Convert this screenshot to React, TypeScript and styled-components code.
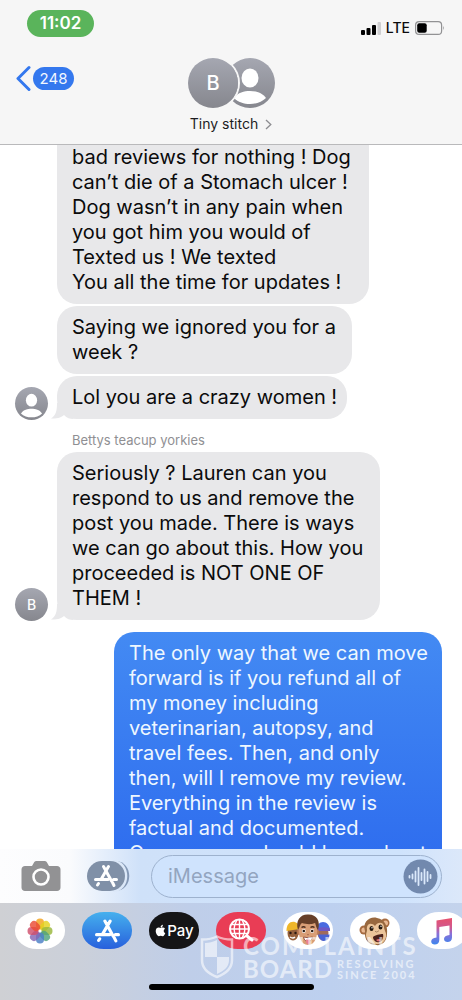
import React from "react";
import styled, { createGlobalStyle, css } from "styled-components";
import { FaApple } from "react-icons/fa";

const GlobalStyle = createGlobalStyle`
  *, *::before, *::after { box-sizing: border-box; }
  body { margin: 0; background: #fff; }
  button { font: inherit; border: 0; padding: 0; background: none; cursor: pointer; }
  svg { display: block; }
`;

const Screen = styled.div`
  position: relative;
  display: flex;
  flex-direction: column;
  height: 100vh;
  overflow: hidden;
  background: #fff;
  color: #0b0b0c;
  font-family: Inter, "Liberation Sans", sans-serif;
`;

/* ---------- header ---------- */

const Header = styled.header`
  flex: none;
  background: #f6f6f6;
  border-bottom: 1px solid #b9b9bb;
`;

const StatusBar = styled.div`
  display: flex;
  justify-content: space-between;
  align-items: flex-start;
  height: 58px;
  padding: 10px 17px 0 27px;
`;

const Clock = styled.button`
  width: 67px;
  height: 27px;
  border-radius: 14px;
  background: #5ab45b;
  color: #fff;
  font-size: 17px;
  font-weight: 600;
  line-height: 27px;
`;

const Signals = styled.div`
  display: flex;
  align-items: center;
  gap: 5px;
  padding-top: 9px;
  font-size: 14px;
  font-weight: 500;
  line-height: 18px;
`;

const TitleBar = styled.div`
  display: grid;
  grid-template-columns: 1fr auto 1fr;
  align-items: start;
  height: 86px;
  padding: 0 16px;
`;

const BackButton = styled.button`
  display: flex;
  align-items: center;
  justify-self: start;
  gap: 2px;
  margin-top: 7px;
`;

const UnreadCount = styled.span`
  width: 41px;
  height: 23px;
  border-radius: 12px;
  background: #3478ee;
  color: #f1f7ff;
  font-size: 15px;
  line-height: 23px;
  text-align: center;
`;

const Contact = styled.button`
  display: flex;
  flex-direction: column;
  align-items: center;
  gap: 7px;
  color: #1c1c1e;
`;

const AvatarPair = styled.span`
  display: flex;
  padding-left: 1px;
`;

const ContactName = styled.span`
  display: flex;
  align-items: center;
  gap: 7px;
  font-size: 14px;
  line-height: 18px;
`;

const Avatar = styled.span<{ $large?: boolean; $front?: boolean }>`
  display: grid;
  place-items: center;
  flex: none;
  overflow: hidden;
  border-radius: 50%;
  background: linear-gradient(#a5a7b1, #86878e);
  color: #fff;
  font-weight: 500;
  width: ${(p) => (p.$large ? 50 : 33)}px;
  height: ${(p) => (p.$large ? 50 : 33)}px;
  font-size: ${(p) => (p.$large ? 20 : 14)}px;
  ${(p) =>
    p.$front &&
    css`
      z-index: 1;
      margin-right: -13px;
      box-shadow: 0 0 0 2px #f6f6f6;
    `}
`;

/* ---------- conversation ---------- */

const Thread = styled.main`
  flex: 1;
  min-height: 0;
  overflow: hidden;
  display: flex;
  flex-direction: column;
  gap: 2px;
  padding: 0 20px 0 15px;
`;

const Row = styled.div<{ $sent?: boolean }>`
  display: flex;
  flex: none;
  align-items: flex-end;
  gap: 9px;
  justify-content: ${(p) => (p.$sent ? "flex-end" : "flex-start")};
  margin-top: ${(p) => (p.$sent ? 10 : 0)}px;
`;

const AvatarSlot = styled.div`
  flex: none;
  width: 33px;
  height: 32px;
`;

const Bubble = styled.p<{ $width: number; $sent?: boolean; $continued?: boolean }>`
  position: relative;
  margin: 0;
  width: ${(p) => p.$width}px;
  max-width: 100%;
  padding: ${(p) => (p.$continued ? 0 : 9)}px 5px 9px 15px;
  border-radius: ${(p) => (p.$continued ? "0 0 20px 20px" : "20px")};
  background: ${(p) => (p.$sent ? "linear-gradient(#438af3, #2d6bee)" : "#e8e8ea")};
  color: ${(p) => (p.$sent ? "#eef7ff" : "#0b0b0c")};
  font-size: 20px;
  line-height: 25px;
  white-space: pre-line;
`;

const TailShape = styled.svg`
  position: absolute;
  left: -6px;
  bottom: 0;
`;

const Sender = styled.div`
  flex: none;
  padding: 11px 0 2px 57px;
  color: #8f8f93;
  font-size: 13px;
  line-height: 16px;
`;

/* ---------- composer ---------- */

const Composer = styled.form`
  flex: none;
  display: flex;
  align-items: center;
  height: 54px;
  padding: 0 20px 0 21px;
  background: linear-gradient(90deg, #fdfdfe 0, #fafbfd 70px, #cfe1f9 140px, #cfe3fc 400px, #dce8fa 100%);
`;

const CameraButton = styled.button`
  margin-right: 26px;
`;

const AppsButton = styled.button`
  margin-right: 21px;
`;

const Field = styled.div`
  flex: 1;
  min-width: 0;
  display: flex;
  align-items: center;
  height: 43px;
  padding: 0 3px 0 16px;
  border: 1px solid #9eb2ce;
  border-radius: 22px;
  background: #cfe3fd;
`;

const MessageInput = styled.input`
  flex: 1;
  min-width: 0;
  border: 0;
  padding: 0;
  outline: 0;
  background: none;
  color: #1c1c1e;
  font: 20px/25px Inter, "Liberation Sans", sans-serif;
  &::placeholder { color: #93a5c0; opacity: 1; }
`;

/* ---------- app drawer ---------- */

const Drawer = styled.nav`
  flex: none;
  display: flex;
  flex-direction: column;
  justify-content: space-between;
  align-items: center;
  height: 97px;
  padding: 9px 0 10px;
  background: linear-gradient(90deg, #cfd0d4 0, #cbd0da 80px, #bfcee9 190px, #bdd0ef 330px, #c4d3ec 100%);
`;

const AppRow = styled.div`
  align-self: stretch;
  display: flex;
  gap: 17px;
  padding-left: 15px;
  overflow: hidden;
`;

const AppButton = styled.button<{ $fill?: string }>`
  display: flex;
  align-items: center;
  justify-content: center;
  flex: none;
  width: 50px;
  height: 37px;
  border-radius: 22px / 18px;
  background: ${(p) => p.$fill ?? "#fff"};
  color: #fff;
  font-size: 15px;
  line-height: 20px;
  font-weight: 500;
`;

const HomeIndicator = styled.div`
  width: 165px;
  height: 6px;
  border-radius: 3px;
  background: #000;
`;

/* ---------- watermark ---------- */

const Watermark = styled.div`
  position: absolute;
  right: 49px;
  bottom: 20px;
  display: flex;
  align-items: center;
  gap: 9px;
  color: #fff;
  opacity: 0.58;
  pointer-events: none;
  font-family: Lato, sans-serif;
  font-weight: 700;
`;

const MarkWords = styled.div`
  width: 170px;
  white-space: nowrap;
`;

const MarkLine = styled.div<{ $spaced?: boolean }>`
  display: flex;
  align-items: center;
  gap: 4px;
  font-size: 24px;
  line-height: 23px;
  letter-spacing: ${(p) => (p.$spaced ? 2 : 1)}px;
`;

const MarkNote = styled.div`
  font-size: 11px;
  line-height: 11px;
  letter-spacing: 2px;
`;

/* ---------- drawings ---------- */

const Person = ({ size }: { size: number }) => (
  <svg width={size} height={size} viewBox="0 0 50 50" aria-hidden="true">
    <ellipse cx="25" cy="20" rx="8.5" ry="9.6" fill="#fff" />
    <path d="M9 40C13 34.5 19 33 25 33s12 1.500 16 7c-4 4-10 6-16 6S13 44 9 40Z" fill="#fff" />
  </svg>
);

const Tail = () => (
  <TailShape width="22" height="16" viewBox="0 0 22 16" aria-hidden="true">
    <path d="M6 0C6 8 5 12 0 15.500C5 15.500 10 15 13 12C16 15 19 16 22 16V0Z" fill="#e8e8ea" />
  </TailShape>
);

const StoreStrokes = () => (
  <g fill="none" stroke="#fff" strokeWidth="3" strokeLinecap="round">
    <path d="M9.500 1.500L17.500 16M14.500 1.500L7 14.500M1.500 14.500H14M19.500 14.500H22.500M18.500 17.500L20 20.500M4.500 18.500L3.500 20" />
  </g>
);

const petals = ["#f3a21c", "#e3d21f", "#98b73a", "#4fa37c", "#4a7fc6", "#8566b5", "#cf4f6d", "#ea4a35"];

const PhotosFlower = () => (
  <svg width="26" height="26" viewBox="-13 -13 26 26" aria-hidden="true">
    {petals.map((color, i) => (
      <rect key={color} x="-4" y="-12.500" width="8" height="11" rx="4" fill={color} opacity="0.82" transform={`rotate(${i * 45})`} />
    ))}
  </svg>
);

const SearchGlobe = () => (
  <svg width="28" height="28" viewBox="0 0 28 28" fill="none" stroke="#fff" strokeLinecap="round" aria-hidden="true">
    <circle cx="12.500" cy="12" r="9.500" strokeWidth="2" />
    <path d="M12.500 3v18M3.500 12h18M5 7.500h15M5 16.500h15M9.500 4c-3 5-3 11 0 16M15.500 4c3 5 3 11 0 16" strokeWidth="1.400" />
    <path d="M20 19l5 4" strokeWidth="3" />
  </svg>
);

const Memoji = () => (
  <svg width="46" height="35" viewBox="0 0 46 35" aria-hidden="true">
    <ellipse cx="8" cy="20" rx="5.500" ry="7.500" fill="#94603c" />
    <path d="M1.500 18C1 6 14 6 14.500 16L8 17Z" fill="#efb629" />
    <circle cx="5.500" cy="20" r="1.200" fill="#2b1a12" />
    <circle cx="10.500" cy="20" r="1.200" fill="#2b1a12" />
    <path d="M5 24q3 2 5 0" stroke="#fff" strokeWidth="1.500" fill="none" />
    <ellipse cx="38" cy="20" rx="5.500" ry="7.500" fill="#a06a5a" />
    <path d="M31.500 18C31 6 45 6 45 18Z" fill="#4a6be0" />
    <path d="M31.500 15.500Q38 13 45 15.500V18H31.500Z" fill="#6f58c4" />
    <path d="M33 21.500h11.500q0 6-6 6.500-4 0-5.500-6.500Z" fill="#4a62d2" />
    <ellipse cx="14" cy="19" rx="1.800" ry="3" fill="#bd7e58" />
    <ellipse cx="32" cy="19" rx="1.800" ry="3" fill="#bd7e58" />
    <path d="M14 14C14 6 32 6 32 14c1 9-2 18-9 18S13 23 14 14Z" fill="#d99e76" />
    <path d="M13 17C10 7 16 1 23 1.500c8-.5 13 6 10 15.500-2-2-2-5-3-7-5 2-9 1-13 0-2 1-2 4-4 7Z" fill="#673f28" />
    <path d="M16.500 14.500q2-1.500 4 0M25.500 14.500q2-1.500 4 0" stroke="#48291a" strokeWidth="1.300" fill="none" />
    <ellipse cx="18.800" cy="18" rx="1.900" ry="1.900" fill="#fff" />
    <ellipse cx="27.200" cy="18" rx="1.900" ry="1.900" fill="#fff" />
    <circle cx="18.800" cy="18" r="1.300" fill="#2a1c15" />
    <circle cx="27.200" cy="18" r="1.300" fill="#2a1c15" />
    <path d="M22 21.500q1 .8 2 0" stroke="#a9684a" strokeWidth="0.900" fill="none" />
    <path d="M18.500 24q4.500 1.500 9 0-1 4.500-4.500 4.500T18.500 24Z" fill="#fff" stroke="#813f31" strokeWidth="0.800" />
    <path d="M21 26.500h4v3q-2 3.500-4 0Z" fill="#e9808c" />
  </svg>
);

const Monkey = () => (
  <svg width="34" height="34" viewBox="0 0 34 34" aria-hidden="true">
    <circle cx="6" cy="16" r="4.500" fill="#a66b40" />
    <circle cx="6" cy="16" r="2.600" fill="#e9b892" />
    <circle cx="27" cy="9" r="4.500" fill="#a66b40" />
    <circle cx="27.500" cy="9" r="2.500" fill="#e9b892" />
    <path d="M7 17C4 8 12 2 19 4c8 1 11 9 10 16 0 7-5 12-11 11-7 0-12-5-11-14Z" fill="#98683f" />
    <path d="M9 16C8 9 14 8 17 12c3-5 9-4 9 1 0 3 3 6 2 10-1 5-5 7-9 7-7 0-11-4-11-9 0-2 1-3 1-5Z" fill="#ebc49a" />
    <ellipse cx="13.500" cy="14.500" rx="2" ry="2.500" fill="#24180f" />
    <ellipse cx="22.500" cy="13" rx="2" ry="2.500" fill="#24180f" />
    <circle cx="14" cy="13.700" r="0.700" fill="#fff" />
    <circle cx="23" cy="12.200" r="0.700" fill="#fff" />
    <path d="M17.500 17.500l1 .5M20.500 17l-1 .6" stroke="#70482d" strokeWidth="1" />
    <path d="M15 23c2-2 7-3 10-3 1 4-1 8-4 8-3 1-6-2-6-5Z" fill="#4b211b" />
    <path d="M18 26q3-2 5 0-2 3-5 0Z" fill="#de7070" />
  </svg>
);

const MusicNote = () => (
  <svg width="26" height="28" viewBox="0 0 26 28" aria-hidden="true">
    <defs>
      <linearGradient id="note" x1="0" y1="0" x2="0" y2="1">
        <stop offset="0" stopColor="#e8506c" />
        <stop offset="0.35" stopColor="#d0588e" />
        <stop offset="0.6" stopColor="#8a70d8" />
        <stop offset="1" stopColor="#3d86ee" />
      </linearGradient>
    </defs>
    <path
      d="M7.500 3.500L23 1v19.500c0 3-2 4.500-4.500 4.500-2 0-3.500-1-3.500-3 0-2.500 2-3.500 5.500-4V8.500L10.300 10v13c0 3-2 4.500-4.600 4.500-2 0-3.500-1-3.500-3 0-2.500 2-3.500 5.300-4Z"
      fill="url(#note)"
    />
  </svg>
);

const Shield = () => (
  <svg width="34" height="44" viewBox="0 0 34 44" aria-hidden="true">
    <path d="M17 1.500C12 4 7 4.500 2 4.500V25c0 9 7 14 15 17 8-3 15-8 15-17V4.500C27 4.500 22 4 17 1.500Z" fill="none" stroke="#fff" strokeWidth="2.500" />
    <path d="M17 5v17H5V8c4 0 8-1 12-3ZM17 22h12v3c0 7-5 11-12 14Z" fill="#fff" />
  </svg>
);

const received = {
  reviews:
    "bad reviews for nothing ! Dog\ncan’t die of a Stomach ulcer !\nDog wasn’t in any pain when\nyou got him you would of\nTexted us ! We texted\nYou all the time for updates !",
  ignored: "Saying we ignored you for a\nweek ?",
  crazy: "Lol you are a crazy women !",
  respond:
    "Seriously ? Lauren can you\nrespond to us and remove the\npost you made. There is ways\nwe can go about this. How you\nproceeded is NOT ONE OF\nTHEM !",
};

const reply =
  "The only way that we can move\nforward is if you refund all of\nmy money including\nveterinarian, autopsy, and\ntravel fees. Then, and only\nthen, will I remove my review.\nEverything in the review is\nfactual and documented.\nOur concern should have about";

export default function App() {
  return (
    <Screen>
      <GlobalStyle />
      <Header>
        <StatusBar>
          <Clock type="button">11:02</Clock>
          <Signals>
            <svg width="20" height="13" viewBox="0 0 20 13" role="img" aria-label="Signal strength">
              <rect x="0" y="8" width="4" height="5" rx="1" />
              <rect x="5.500" y="6" width="4" height="7" rx="1" />
              <rect x="11" y="3" width="4" height="10" rx="1" />
              <rect x="16.500" y="0" width="3.500" height="13" rx="1" fill="#cfcfd1" />
            </svg>
            <span>LTE</span>
            <svg width="30" height="14" viewBox="0 0 30 14" role="img" aria-label="Battery">
              <rect x="0.600" y="0.600" width="26" height="12.800" rx="3.500" fill="none" stroke="#929294" strokeWidth="1.200" />
              <rect x="2.200" y="2.200" width="9.500" height="9.600" rx="2" />
              <path d="M28.300 4.800q1.500 2.200 0 4.400Z" fill="#8b8b8d" />
            </svg>
          </Signals>
        </StatusBar>
        <TitleBar>
          <BackButton type="button" aria-label="Back, 248 unread">
            <svg width="15" height="27" viewBox="0 0 15 27" fill="none" stroke="#3478ee" strokeWidth="3" strokeLinecap="round" strokeLinejoin="round">
              <path d="M13 2.500L2 13.500L13 24.500" />
            </svg>
            <UnreadCount>248</UnreadCount>
          </BackButton>
          <Contact type="button">
            <AvatarPair>
              <Avatar $large $front>B</Avatar>
              <Avatar $large>
                <Person size={50} />
              </Avatar>
            </AvatarPair>
            <ContactName>
              Tiny stitch
              <svg width="7" height="11" viewBox="0 0 7 11" fill="none" stroke="#8d8d91" strokeWidth="1.300">
                <path d="M1 1L5.800 5.500L1 10" />
              </svg>
            </ContactName>
          </Contact>
        </TitleBar>
      </Header>

      <Thread>
        <Row>
          <AvatarSlot />
          <Bubble $width={312} $continued>{received.reviews}</Bubble>
        </Row>
        <Row>
          <AvatarSlot />
          <Bubble $width={295}>{received.ignored}</Bubble>
        </Row>
        <Row>
          <AvatarSlot>
            <Avatar>
              <Person size={33} />
            </Avatar>
          </AvatarSlot>
          <Bubble $width={290}>
            <Tail />
            {received.crazy}
          </Bubble>
        </Row>
        <Sender>Bettys teacup yorkies</Sender>
        <Row>
          <AvatarSlot>
            <Avatar>B</Avatar>
          </AvatarSlot>
          <Bubble $width={323}>
            <Tail />
            {received.respond}
          </Bubble>
        </Row>
        <Row $sent>
          <Bubble $width={328} $sent>{reply}</Bubble>
        </Row>
      </Thread>

      <Composer onSubmit={(e) => e.preventDefault()}>
        <CameraButton type="button" aria-label="Camera">
          <svg width="40" height="31" viewBox="0 0 40 31">
            <path
              d="M4 5h7l2-3.500C13.500.500 14.500 0 15.500 0h8c1 0 2 .500 2.500 1.500L28 5h8c2 0 3.500 1.500 3.500 3.500v18c0 2-1.500 3.500-3.500 3.500H4C2 30 .5 28.500.5 26.500v-18C.5 6.500 2 5 4 5Z"
              fill="#929294"
            />
            <circle cx="20" cy="16" r="7.500" fill="none" stroke="#fff" strokeWidth="2.600" />
          </svg>
        </CameraButton>
        <AppsButton type="button" aria-label="Apps">
          <svg width="43" height="32" viewBox="0 0 43 32">
            <path d="M28 1C47 1 47 31 28 31Z" fill="#8498b5" />
            <path d="M26 0C45 0 45 32 26 32Z" fill="#dce8f8" />
            <rect x="0" y="1" width="38" height="30" rx="15" fill="#8090a7" />
            <g transform="translate(7 5)">
              <StoreStrokes />
            </g>
          </svg>
        </AppsButton>
        <Field>
          <MessageInput type="text" placeholder="iMessage" aria-label="iMessage" />
          <button type="button" aria-label="Record audio">
            <svg width="35" height="35" viewBox="0 0 35 35" stroke="#dbe9fb" strokeWidth="1.800" strokeLinecap="round">
              <circle cx="17.500" cy="17.500" r="17" fill="#7289ae" stroke="none" />
              <path d="M6.500 17v1.500M9.500 15.500v4M12.500 12.500v10M15.500 9v17M18.500 14v7M21.500 10.500v14M24.500 13v9M27.500 16v3" />
            </svg>
          </button>
        </Field>
      </Composer>

      <Drawer aria-label="iMessage apps">
        <AppRow>
          <AppButton type="button" aria-label="Photos">
            <PhotosFlower />
          </AppButton>
          <AppButton type="button" aria-label="App Store" $fill="linear-gradient(#45b0ee, #2860dc)">
            <svg width="25" height="24" viewBox="0 0 24 22">
              <StoreStrokes />
            </svg>
          </AppButton>
          <AppButton type="button" $fill="#151517">
            <FaApple size={13} aria-label="Apple" />
            Pay
          </AppButton>
          <AppButton type="button" aria-label="Image search" $fill="#e93d55">
            <SearchGlobe />
          </AppButton>
          <AppButton type="button" aria-label="Memoji">
            <Memoji />
          </AppButton>
          <AppButton type="button" aria-label="Animoji">
            <Monkey />
          </AppButton>
          <AppButton type="button" aria-label="Music">
            <MusicNote />
          </AppButton>
        </AppRow>
        <HomeIndicator />
      </Drawer>

      <Watermark>
        <Shield />
        <MarkWords>
          <MarkLine $spaced>COMPLAINTS</MarkLine>
          <MarkLine>
            <span>BOARD</span>
            <MarkNote>
              RESOLVING
              <br />
              SINCE 2004
            </MarkNote>
          </MarkLine>
        </MarkWords>
      </Watermark>
    </Screen>
  );
}
